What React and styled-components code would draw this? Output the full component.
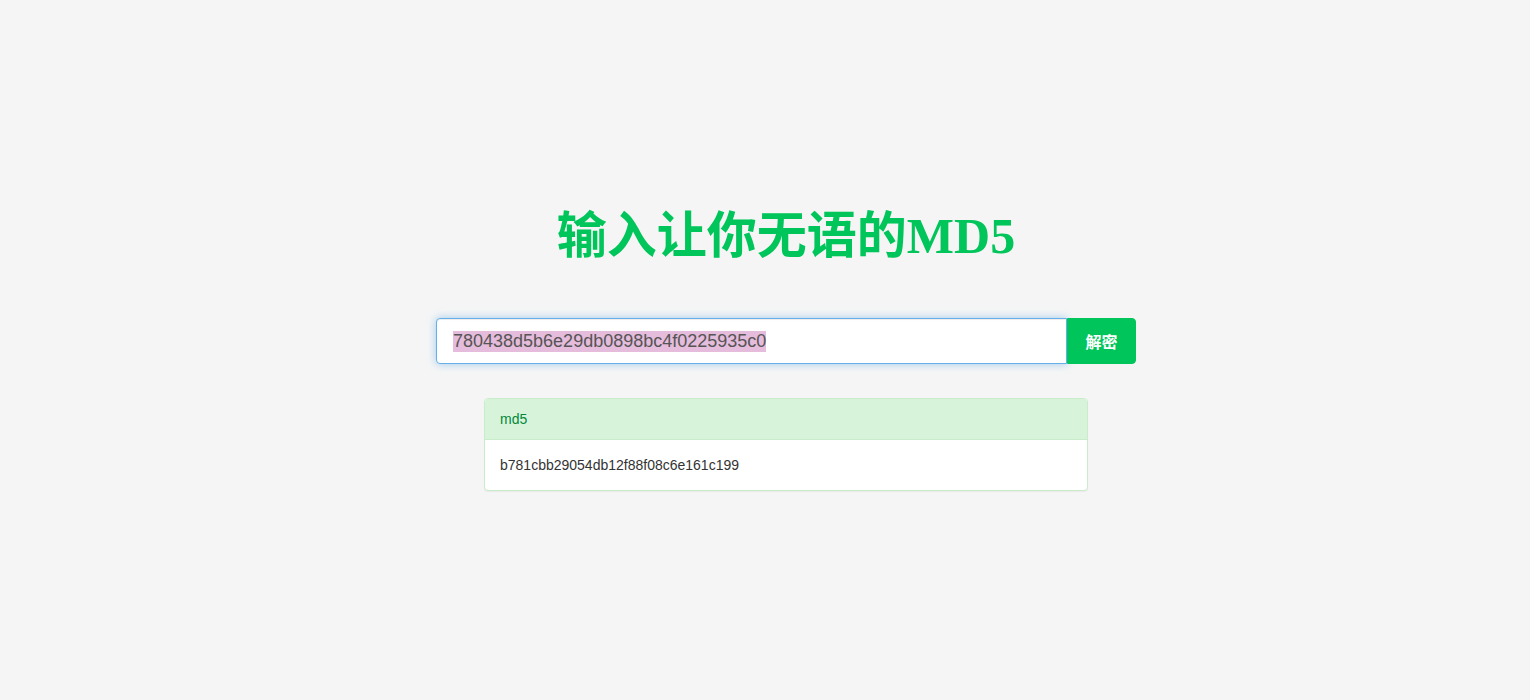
import { useEffect, useRef } from 'react';
import styled, { createGlobalStyle } from 'styled-components';

const GlobalStyle = createGlobalStyle`
  html, body {
    margin: 0;
    background: #f5f5f5;
    font-family: "Liberation Sans", "Noto Sans CJK SC", sans-serif;
  }

  ::selection {
    background: #e6bcdc;
  }
`;

const Page = styled.main`
  min-height: 700px;
  padding: 206px 0 0 42px;
  box-sizing: border-box;
  display: flex;
  flex-direction: column;
  align-items: center;
`;

const Title = styled.h1`
  margin: 0;
  height: 60px;
  line-height: 60px;
  font-family: "Liberation Serif", "Noto Sans CJK SC", serif;
  font-size: 50px;
  font-weight: bold;
  color: #00c55a;
  white-space: nowrap;
`;

const SearchForm = styled.form`
  margin-top: 52px;
  width: 700px;
  display: flex;
`;

const Input = styled.input`
  flex: 1;
  height: 46px;
  box-sizing: border-box;
  padding: 0 16px;
  border: 1px solid #66afe9;
  border-radius: 4px 0 0 4px;
  outline: none;
  box-shadow: inset 0 1px 1px rgba(0, 0, 0, 0.075), 0 0 8px rgba(102, 175, 233, 0.6);
  font-family: "Liberation Sans", sans-serif;
  font-size: 18px;
  color: #555;
  background: #fff;

  &::selection {
    background: #e6bcdc;
    color: #555;
  }
`;

const Button = styled.button`
  width: 69px;
  height: 46px;
  border: 1px solid #00c55a;
  border-radius: 0 4px 4px 0;
  background: #00c55a;
  color: #fff;
  font-family: "Noto Sans CJK SC", sans-serif;
  font-size: 16px;
  font-weight: bold;
  cursor: pointer;
`;

const Panel = styled.section`
  margin-top: 34px;
  width: 604px;
  box-sizing: border-box;
  background: #fff;
  border: 1px solid #c9ecca;
  border-radius: 4px;
  box-shadow: 0 1px 1px rgba(0, 0, 0, 0.05);
  overflow: hidden;
`;

const PanelHeading = styled.div`
  height: 40px;
  padding: 0 15px;
  display: flex;
  align-items: center;
  background: #d7f4da;
  border-bottom: 1px solid #c9ecca;
  color: #03873a;
  font-size: 14px;
`;

const PanelBody = styled.div`
  height: 50px;
  padding: 0 15px;
  display: flex;
  align-items: center;
  color: #333;
  font-size: 14px;
`;

const App = () => {
  const inputRef = useRef(null);

  useEffect(() => {
    inputRef.current.focus();
    inputRef.current.select();
  }, []);

  return (
    <>
      <GlobalStyle />
      <Page>
        <Title>输入让你无语的MD5</Title>
        <SearchForm onSubmit={(e) => e.preventDefault()}>
          <Input ref={inputRef} defaultValue="780438d5b6e29db0898bc4f0225935c0" />
          <Button type="submit">解密</Button>
        </SearchForm>
        <Panel>
          <PanelHeading>md5</PanelHeading>
          <PanelBody>b781cbb29054db12f88f08c6e161c199</PanelBody>
        </Panel>
      </Page>
    </>
  );
};

export default App;
